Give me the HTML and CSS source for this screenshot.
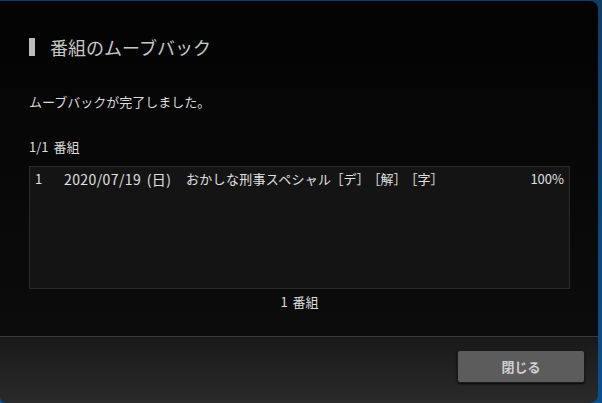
FILE: index.html
```html
<!DOCTYPE html>
<html lang="ja">
<head>
    <meta charset="UTF-8">
    <title>番組のムーブバック</title>
    <link rel="stylesheet" href="styles.css">
</head>
<body>
    <div class="dialog">
        <div class="dialog-body">
            <h1 class="title">番組のムーブバック</h1>
            <p class="status">ムーブバックが完了しました。</p>
            <div class="count">1/1 番組</div>
            <div class="list">
                <div class="row">
                    <span class="num">1</span>
                    <span class="date">2020/07/19 (日)</span>
                    <span class="name">おかしな刑事スペシャル<span class="tag">［デ］</span><span class="tag">［解］</span><span class="tag">［字］</span></span>
                    <span class="pct">100%</span>
                </div>
            </div>
            <div class="total">1 番組</div>
        </div>
        <div class="dialog-footer">
            <button class="close-btn">閉じる</button>
        </div>
    </div>
</body>
</html>
```

FILE: styles.css
```css
html, body {
    margin: 0;
    padding: 0;
    height: 100%;
}

body {
    background: linear-gradient(180deg, #123c63, #0b4f8f);
    font-family: "Noto Sans CJK JP", "Noto Sans", sans-serif;
    color: #dcdcdc;
    overflow: hidden;
    padding-top: 1px;
    box-sizing: border-box;
}

.dialog {
    width: 598px;
    height: 402px;
    border-radius: 0 8px 8px 6px;
    overflow: hidden;
    display: flex;
    flex-direction: column;
}

.dialog-body {
    height: 335px;
    background: linear-gradient(180deg, #030303, #0c0c0c);
    padding: 0 28px 0 29px;
    box-sizing: border-box;
}

.title {
    margin: 0;
    padding-top: 34px;
    height: 24px;
    display: flex;
    align-items: center;
    font-size: 18px;
    font-weight: normal;
    line-height: 24px;
    color: #c8c8c8;
}

.title::before {
    content: "";
    width: 6px;
    height: 18px;
    background: #bcbcbc;
    margin-right: 15px;
}

.status {
    margin: 0;
    padding-top: 34px;
    font-size: 13px;
    line-height: 18px;
}

.count {
    padding-top: 27px;
    font-size: 13px;
    line-height: 18px;
    word-spacing: 2px;
}

.list {
    margin-top: 10px;
    height: 121px;
    background: #141414;
    border: 1px solid #2c2c2c;
}

.row {
    display: flex;
    font-size: 13px;
    line-height: 24px;
    padding: 0 5px 0 5px;
    color: #e0e0e0;
}

.num {
    width: 29px;
}

.date {
    width: 122px;
    font-size: 14px;
    letter-spacing: 0.4px;
    word-spacing: 2px;
}

.name {
    flex: 1;
    letter-spacing: 0.3px;
}

.tag {
    display: inline-block;
    letter-spacing: 0;
    margin-left: -2px;
}

.tag:first-child {
    margin-left: -1px;
}

.total {
    text-align: center;
    font-size: 13px;
    line-height: 18px;
    padding-top: 4px;
    word-spacing: 2px;
}

.dialog-footer {
    flex: 1;
    border-top: 1px solid #3a3a3a;
    background: linear-gradient(180deg, #191919, #2a2a2a);
    display: flex;
    justify-content: flex-end;
    align-items: flex-start;
    padding: 13px 13px 0 0;
}

.close-btn {
    width: 128px;
    height: 33px;
    background: #5c5c5c;
    border: 1px solid #1a1a1a;
    border-radius: 3px;
    box-shadow: 0 1px 2px rgba(0, 0, 0, 0.8);
    color: #cfcfcf;
    font-family: inherit;
    font-size: 13px;
    font-weight: bold;
    cursor: pointer;
}
```
